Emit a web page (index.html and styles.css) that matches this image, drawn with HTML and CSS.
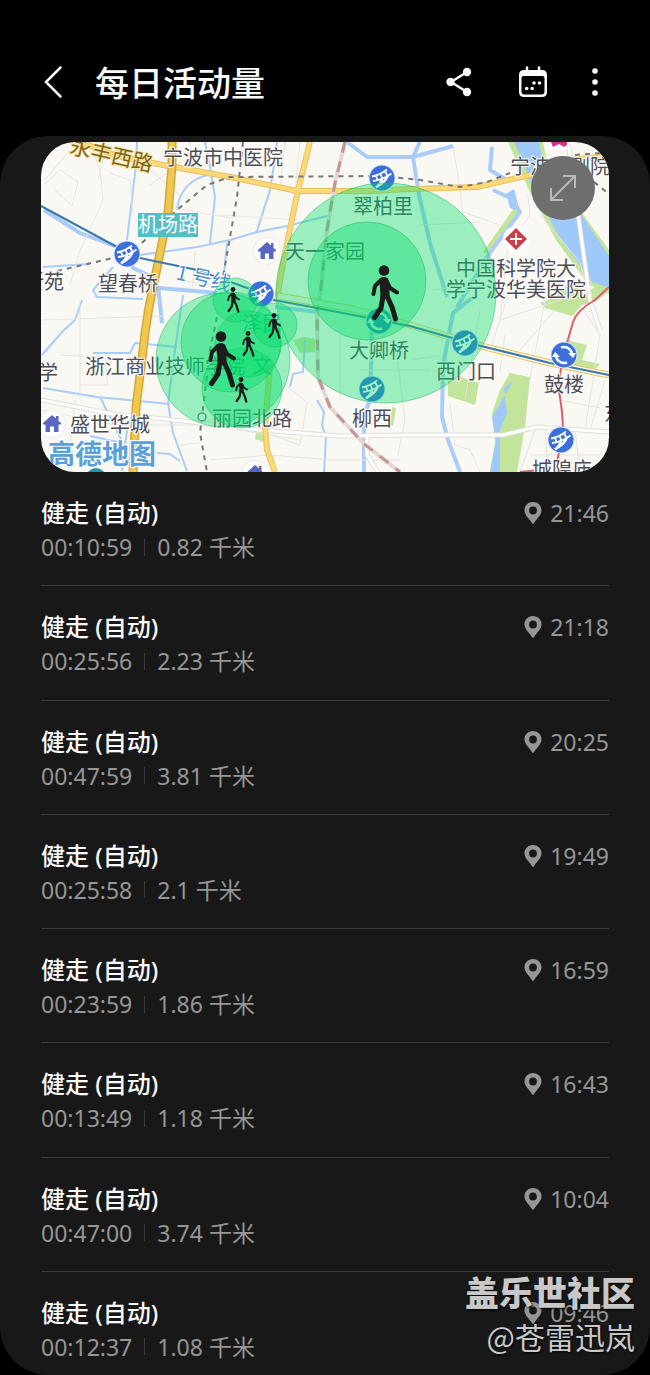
FILE: index.html
```html
<!doctype html>
<html lang="zh-CN">
<head>
    <meta charset="utf-8">
    <meta name="viewport" content="width=device-width, initial-scale=1">
    <title>每日活动量</title>
    <link rel="stylesheet" href="styles.css">
</head>
<body>
    <!--公用图标-->
    <svg class="defs" width="0" height="0" aria-hidden="true">
        <symbol id="pin" viewBox="0 0 18 22">
            <path fill-rule="evenodd" d="M9 0C4 0 .5 3.700.5 8.300.5 13.500 5.500 17 8 21.200Q9 22.400 10 21.200C12.500 17 17.500 13.500 17.500 8.300 17.500 3.700 14 0 9 0ZM9 4.600A3.900 3.900 0 1 1 9 12.400 3.900 3.900 0 1 1 9 4.600Z"/>
        </symbol>
        <symbol id="walker" viewBox="0 0 28 57">
            <circle cx="13" cy="5.500" r="5.300"/>
            <path d="M8 14Q12 10.500 17 13.500L18.500 21 18.500 34 9.500 34 9 23Z"/>
            <path class="limb-thin" d="M10 15L4 21 2.500 29M15.500 15.500L19 23 26 27.500"/>
            <path class="limb" d="M16 31L21 42 24.500 54M12 31L10 43 3.500 52.500"/>
        </symbol>
        <symbol id="metro" viewBox="0 0 28 28">
            <circle cx="14" cy="14" r="13.500" fill="#dbe8fb"/>
            <circle cx="14" cy="14" r="12.500" fill="#3a6fdc"/>
            <path fill="none" stroke="#fff" stroke-width="1.800" d="M4 12.500Q12 11 19 5.500M5 17Q15 16 23.500 9.500M8 11.500L9.500 16M12.500 10L14.500 14.500M17 7L19.500 12"/>
            <path fill="none" stroke="#fff" stroke-width="2.600" d="M14 14.500Q13 20 8 23.500M19.500 12Q18 17 11 21.500"/>
        </symbol>
        <symbol id="loop" viewBox="0 0 28 28">
            <circle cx="14" cy="14" r="13.500" fill="#dbe8fb"/>
            <circle cx="14" cy="14" r="12.500" fill="#3a6fdc"/>
            <path fill="none" stroke="#fff" stroke-width="2.600" d="M11 6.500A8.500 8.500 0 0 1 22 12M17 21.500A8.500 8.500 0 0 1 6 16"/>
            <path fill="#fff" d="M18 12H26L23 17ZM2 16H10L5 11Z"/>
        </symbol>
        <symbol id="house" viewBox="0 0 28 28">
            <circle cx="14" cy="14" r="13.500" fill="#fff" stroke="#eceaea"/>
            <path fill="#5b66c4" d="M5 13L14 5 18 8.500V6H20.500V11L23 13V14.500H20.500V22H16V16.500H12V22H7.500V14.500H5Z"/>
        </symbol>
    </svg>

    <div class="page">
        <header class="topbar">
            <button class="icon-btn narrow" type="button" aria-label="返回">
                <svg width="24" height="36" viewBox="0 0 24 36"><path class="line" d="M19.500 3.500L5 18 19.500 32.500"/></svg>
            </button>
            <h1 class="topbar-title">每日活动量</h1>
            <button class="icon-btn" type="button" aria-label="分享">
                <svg width="28" height="32" viewBox="0 0 28 32">
                    <path class="line" d="M22 6L6 16 22 26"/>
                    <circle cx="22" cy="6" r="4.200"/><circle cx="5.500" cy="16" r="4.200"/><circle cx="22" cy="26" r="4.200"/>
                </svg>
            </button>
            <button class="icon-btn" type="button" aria-label="日历">
                <svg width="30" height="32" viewBox="0 0 30 32">
                    <path class="line" d="M9 1.500V5M21 1.500V5"/>
                    <path fill-rule="evenodd" d="M6 4H24Q29 4 29 9V26Q29 31 24 31H6Q1 31 1 26V9Q1 4 6 4ZM5.500 10Q3.500 10 3.500 12V25.500Q3.500 28.500 6.500 28.500H23.500Q26.500 28.500 26.500 25.500V12Q26.500 10 24.500 10Z"/>
                    <circle cx="16" cy="17" r="1.800"/><circle cx="21.500" cy="17" r="1.800"/>
                    <circle cx="8.700" cy="22.500" r="1.800"/><circle cx="14.200" cy="22.500" r="1.800"/>
                </svg>
            </button>
            <button class="icon-btn narrow" type="button" aria-label="更多">
                <svg width="8" height="28" viewBox="0 0 8 28"><circle cx="4" cy="3" r="2.800"/><circle cx="4" cy="14" r="2.800"/><circle cx="4" cy="25" r="2.800"/></svg>
            </button>
        </header>

        <main class="panel">
            <div class="map">
                <svg class="map-canvas" viewBox="41 142 568 330" role="img" aria-label="活动地图">
                    <rect x="41" y="142" width="568" height="330" fill="#faf8f3"/>

                    <!--绿地-->
                    <g fill="#c3e59b">
                        <path d="M510 373L530 377 525 427 517 472H490L495 443 492 413 500 390Z"/>
                        <path d="M448 381L460 377 479 383 475 405 448 396Z"/>
                        <path d="M540 303L553 298 565 287 575 280 581 296 595 287 609 277V292L595 302 582 305 572 316 545 308Z"/>
                        <path d="M566 340L587 345 582 360 600 364 594 371 567 366Z"/>
                        <path d="M293 340L304 337 315 339 315 352 300 353ZM256 431L264 432 263 442 255 439ZM392 407L396 408 393 426 389 425Z"/>
                        <path d="M508 142H543L548 166 609 250V294L588 284 556 240 528 188ZM520 210L487 254 483 252 514 208Z"/>
                    </g>

                    <!--水系-->
                    <g fill="#9fc8fb">
                        <path d="M514 142H539L544 168 577 208 609 256V288L592 282 560 238 532 186 522 160Z"/>
                        <path d="M513 381L504 388 507 413 500 430 500 472H490L496 440 492 417 502 400Z"/>
                        <path d="M506 194L514 189 520 212 510 208Z"/>
                    </g>
                    <g class="river">
                        <path d="M137 142L136 165 133 190 127 240M205 142L210 167 215 197 210 243M177 210Q179 190 195 180T230 180"/>
                        <path d="M43 267L90 264M113 267L93 290 97 297 143 299M140 255L197 247 230 240 257 232 287 226 327 216"/>
                        <path d="M277 142L274 165 270 190 257 231M227 243L223 287M82 300L75 320 63 331 42 355"/>
                        <path d="M93 353L130 353 135 343 177 347M43 388L97 397 170 404M100 397L113 423 123 443M90 436L123 443"/>
                        <path d="M183 295L175 350 168 403 173 433 187 471M157 453L170 454 180 461M127 430L122 471"/>
                        <path d="M305 340L303 372 293 374 290 387M317 400L324 412 322 425 326 437 324 472"/>
                    </g>
                    <g class="river wide">
                        <path d="M44 210L80 233 120 248 133 268 150 276M158 286L162 323M160 288L217 293M275 307L318 312"/>
                        <path d="M347 142L367 157 413 157 453 146M420 142L413 157 419 195 430 243 447 297M492 147L490 170 505 179M493 190L512 199 520 212 489 254 457 307"/>
                        <path d="M472 298L453 313 446 350 443 367 442 417 448 440 460 472M372 330L370 400 364 415 364 472"/>
                    </g>

                    <!--小路-->
                    <g class="lane">
                        <path d="M45 180L70 150M55 190L72 206 78 182 60 170 45 184M110 173L130 180 133 215M90 142L100 170 103 200 92 225 80 250 70 285"/>
                        <path d="M108 142L98 180M150 170L180 195M150 185L185 160M41 320L165 316M80 300L80 400M60 355L105 357 108 385 80 385M75 400L70 445"/>
                        <path d="M190 142V175M175 208L230 218M195 252L192 290M175 280L215 285M220 215L300 220M285 142L280 190M300 142L290 240"/>
                        <path d="M41 410L115 425 210 425 300 440M180 445L200 443M210 460L270 455 330 460M285 385L307 402 300 445 265 433"/>
                        <path d="M453 145L460 190 463 215M420 225L480 222M463 212L500 225M435 290L480 280M500 320L560 300M480 310L465 400"/>
                        <path d="M528 195L530 215 508 245 500 320M540 215L580 262 590 305M555 310L520 350M505 335L500 372M530 380L545 300M490 350L510 290M580 305L600 335 585 430"/>
                        <path d="M410 360L440 356M395 340L405 420 398 455M340 335V400M360 370H430M330 460H400M560 400L600 408M450 405L455 445 470 450 480 472"/>
                        <path d="M535 430L520 472M545 430L548 472M575 430L580 472M530 455H600M605 380L590 430"/>
                    </g>
                    <g class="street-edge"><path d="M41 400L113 414 165 419 260 430 340 436 410 435 503 435 537 427 609 432M367 434V455L378 472M568 142L590 300 600 330"/></g>
                    <g class="street"><path d="M41 400L113 414 165 419 260 430 340 436 410 435 503 435 537 427 609 432M367 434V455L378 472M568 142L590 300 600 330"/></g>

                    <!--主干道-->
                    <path class="road-edge" d="M80 142L117 156 163 165 230 177 297 191H370L410 189 477 187 530 175 570 160 609 156M310 142L298 190 283 263 277 300M270 365L265 427 267 450 275 472"/>
                    <path class="road" d="M80 142L117 156 163 165 230 177 297 191H370L410 189 477 187 530 175 570 160 609 156M310 142L298 190 283 263 277 300M270 365L265 427 267 450 275 472"/>
                    <path class="highway-edge" d="M172 142V167L168 213 158 263 149 307 145 333 141 367 136 407 133 472"/>
                    <path class="highway" d="M172 142V167L168 213 158 263 149 307 145 333 141 367 136 407 133 472"/>

                    <!--铁路、地铁-->
                    <path class="rail-base" d="M345 142L335 183 327 230 320 297 317 313 318 377 330 407 363 443 400 472"/>
                    <path class="rail" d="M345 142L335 183 327 230 320 297 317 313 318 377 330 407 363 443 400 472"/>
                    <path class="dash" d="M57 271L113 258 143 242 177 210 207 185 230 177 380 176 420 180 460 187 487 182 510 173M243 142L237 197 223 277M217 317L210 350 202 417 200 433 207 472M575 155L600 153M594 182L609 194"/>
                    <path class="metro-edge" d="M278 296L353 309 410 325 477 345 550 363 609 375"/>
                    <path class="metro-gap" d="M278 296L353 309 410 325 477 345 550 363 609 375"/>
                    <path class="metro-line" d="M41 206L117 247 140 258 197 270 250 289 273 300 317 308 410 326 477 345 550 363 609 375"/>
                    <path class="red-line" d="M609 287L595 300Q577 310 573 322L563 357 558 387Q563 410 563 433L555 472M520 472L540 470"/>

                    <circle cx="202" cy="417" r="4" fill="#fff" stroke="#777" stroke-width="1.500"/>
                    <circle cx="96" cy="478" r="10" fill="#2494b0"/>
                    <circle cx="559" cy="138" r="13" fill="#fff"/>
                    <path fill="#d63384" d="M551 142H567V145L564 147 559 144 553 147Z"/>

                    <!--图标-->
                    <use href="#house" x="253" y="237" width="28" height="28"/>
                    <use href="#house" x="38" y="410" width="28" height="28"/>
                    <use href="#house" x="241" y="460" width="28" height="28"/>
                    <circle cx="516" cy="239" r="13" fill="#fff"/>
                    <path fill="#cc3d49" d="M516 228L527 239 516 250 505 239Z"/>
                    <path stroke="#fff" stroke-width="2" d="M516 233V245M510 239H522"/>
                    <use href="#metro" x="113" y="240" width="28" height="28"/>
                    <use href="#metro" x="368" y="164" width="28" height="28"/>
                    <use href="#metro" x="247" y="280" width="28" height="28"/>
                    <use href="#metro" x="451" y="329" width="28" height="28"/>
                    <use href="#metro" x="358" y="375" width="28" height="28"/>
                    <use href="#metro" x="547" y="426" width="28" height="28"/>
                    <use href="#loop" x="365" y="307" width="28" height="28"/>
                    <use href="#loop" x="550" y="341" width="28" height="28"/>

                    <!--地名-->
                    <g class="place">
                        <text x="163" y="165">宁波市中医院</text>
                        <text x="24" y="289">新苑</text>
                        <text x="98" y="291">望春桥</text>
                        <text x="285" y="259">天一家园</text>
                        <text x="353" y="214">翠柏里</text>
                        <text x="456" y="276">中国科学院大</text>
                        <text x="446" y="297">学宁波华美医院</text>
                        <text x="510" y="174">宁波大剧院</text>
                        <text x="38" y="380">学</text>
                        <text x="85" y="374">浙江商业技师学院</text>
                        <text x="70" y="432">盛世华城</text>
                        <text x="212" y="426">丽园北路</text>
                        <text x="349" y="358">大卿桥</text>
                        <text x="352" y="426">柳西</text>
                        <text x="436" y="379">西门口</text>
                        <text x="544" y="392">鼓楼</text>
                        <text x="532" y="477">城隍庙</text>
                        <text x="604" y="421">东</text>
                        <text class="teal" x="242" y="331">泽民</text>
                        <text class="teal" x="252" y="373">文</text>
                        <text class="brown" x="69" y="153" transform="rotate(13 69 153)">永丰西路</text>
                        <text class="blue" x="175" y="279" transform="rotate(13 175 279)">1 号线</text>
                    </g>
                    <rect x="138" y="213" width="60" height="24" fill="#52bec5"/>
                    <text class="road-tag" x="138" y="232">机场路</text>
                    <text class="brand" x="48" y="464">高德地图</text>

                    <!--活动范围-->
                    <g class="zone">
                        <circle cx="386" cy="293" r="110"/>
                        <circle cx="367" cy="281" r="59"/>
                        <circle cx="223" cy="360" r="67"/>
                        <circle cx="231" cy="342" r="50"/>
                        <circle cx="242" cy="388" r="40"/>
                        <circle cx="248" cy="344" r="33"/>
                        <circle cx="235" cy="300" r="22"/>
                        <circle cx="275" cy="325" r="22"/>
                    </g>
                    <g class="walkers">
                        <use href="#walker" x="371" y="265" width="28" height="57"/>
                        <use href="#walker" x="208" y="331" width="28" height="57"/>
                        <use href="#walker" x="227" y="287" width="13" height="26"/>
                        <use href="#walker" x="268" y="313" width="13" height="26"/>
                        <use href="#walker" x="242" y="331" width="13" height="26"/>
                        <use href="#walker" x="235" y="377" width="13" height="26"/>
                    </g>
                </svg>
                <button class="expand" type="button" aria-label="展开地图">
                    <svg width="28" height="28" viewBox="0 0 28 28"><path d="M2 26L26 2M14 2H26V14M2 14V26H14"/></svg>
                </button>
            </div>

            <ul class="records">
                <li class="record">
                    <div class="info">
                        <h2 class="name">健走 (自动)</h2>
                        <p class="detail"><span>00:10:59</span><span class="distance">0.82 千米</span></p>
                    </div>
                    <div class="time"><svg class="pin"><use href="#pin"/></svg><time>21:46</time></div>
                </li>
                <li class="record">
                    <div class="info">
                        <h2 class="name">健走 (自动)</h2>
                        <p class="detail"><span>00:25:56</span><span class="distance">2.23 千米</span></p>
                    </div>
                    <div class="time"><svg class="pin"><use href="#pin"/></svg><time>21:18</time></div>
                </li>
                <li class="record">
                    <div class="info">
                        <h2 class="name">健走 (自动)</h2>
                        <p class="detail"><span>00:47:59</span><span class="distance">3.81 千米</span></p>
                    </div>
                    <div class="time"><svg class="pin"><use href="#pin"/></svg><time>20:25</time></div>
                </li>
                <li class="record">
                    <div class="info">
                        <h2 class="name">健走 (自动)</h2>
                        <p class="detail"><span>00:25:58</span><span class="distance">2.1 千米</span></p>
                    </div>
                    <div class="time"><svg class="pin"><use href="#pin"/></svg><time>19:49</time></div>
                </li>
                <li class="record">
                    <div class="info">
                        <h2 class="name">健走 (自动)</h2>
                        <p class="detail"><span>00:23:59</span><span class="distance">1.86 千米</span></p>
                    </div>
                    <div class="time"><svg class="pin"><use href="#pin"/></svg><time>16:59</time></div>
                </li>
                <li class="record">
                    <div class="info">
                        <h2 class="name">健走 (自动)</h2>
                        <p class="detail"><span>00:13:49</span><span class="distance">1.18 千米</span></p>
                    </div>
                    <div class="time"><svg class="pin"><use href="#pin"/></svg><time>16:43</time></div>
                </li>
                <li class="record">
                    <div class="info">
                        <h2 class="name">健走 (自动)</h2>
                        <p class="detail"><span>00:47:00</span><span class="distance">3.74 千米</span></p>
                    </div>
                    <div class="time"><svg class="pin"><use href="#pin"/></svg><time>10:04</time></div>
                </li>
                <li class="record">
                    <div class="info">
                        <h2 class="name">健走 (自动)</h2>
                        <p class="detail"><span>00:12:37</span><span class="distance">1.08 千米</span></p>
                    </div>
                    <div class="time"><svg class="pin"><use href="#pin"/></svg><time>09:46</time></div>
                </li>
            </ul>
        </main>

        <!--水印-->
        <div class="watermark">
            <strong>盖乐世社区</strong>
            <span>@苍雷迅岚</span>
        </div>
    </div>
</body>
</html>
```
FILE: styles.css
```css
*{
    margin:0;
    padding:0;
    box-sizing:border-box;
}
body{
    background:#000;
    color:#fafafa;
    font-family:"Noto Sans","Noto Sans CJK SC",sans-serif;
}
ul{
    list-style:none;
}
.defs{
    position:absolute;
}
.page{
    position:relative;
    display:flex;
    flex-direction:column;
    min-height:100vh;
}

/* 顶部 */
.topbar{
    display:flex;
    align-items:center;
    gap:26px;
    padding:28px 43px 0 41px;
    height:136px;
}
.topbar-title{
    flex:1;
    padding-left:4px;
    font-family:"Noto Sans CJK SC",sans-serif;
    font-size:34px;
    font-weight:500;
    line-height:48px;
}
.icon-btn{
    display:flex;
    align-items:center;
    justify-content:center;
    width:48px;
    height:48px;
    border:0;
    background:none;
    cursor:pointer;
}
.icon-btn.narrow{
    width:24px;
}
.icon-btn svg{
    flex:none;
    fill:#fafafa;
}
.icon-btn .line{
    fill:none;
    stroke:#fafafa;
    stroke-width:2.500;
    stroke-linecap:round;
}

/* 内容面板 */
.panel{
    flex:1;
    display:flex;
    flex-direction:column;
    padding:6px 41px 0;
    border-radius:48px;
    background:#181818;
}

/* 地图 */
.map{
    position:relative;
    overflow:hidden;
    border-radius:34px;
}
.map-canvas{
    display:block;
    width:100%;
    height:auto;
}
.map-canvas path{
    stroke-linejoin:round;
}
.river path,
.lane path,
.street path,
.street-edge path,
.road,
.road-edge,
.highway,
.highway-edge,
.rail,
.rail-base,
.dash,
.metro-edge,
.metro-gap,
.metro-line,
.red-line{
    fill:none;
}
.river{
    stroke:#a9cdf8;
    stroke-width:2;
}
.river.wide{
    stroke-width:4;
}
.lane{
    stroke:#e6e4e0;
    stroke-width:1;
}
.street-edge{
    stroke:#e0deda;
    stroke-width:5;
}
.street{
    stroke:#fff;
    stroke-width:3;
}
.road-edge{
    stroke:#e9bf63;
    stroke-width:6;
}
.road{
    stroke:#fbd977;
    stroke-width:4;
}
.highway-edge{
    stroke:#d6a63a;
    stroke-width:9;
}
.highway{
    stroke:#efc850;
    stroke-width:6;
}
.rail-base{
    stroke:#e3d6d4;
    stroke-width:4;
}
.rail{
    stroke:#c09696;
    stroke-width:3;
    stroke-dasharray:11 9;
}
.dash{
    stroke:#77777a;
    stroke-width:2;
    stroke-dasharray:5 5;
}
.metro-edge{
    stroke:#e8c65c;
    stroke-width:7;
}
.metro-gap{
    stroke:#f6f4e8;
    stroke-width:5;
}
.metro-line{
    stroke:#3b78ae;
    stroke-width:2;
}
.red-line{
    stroke:#d9606e;
    stroke-width:2;
}
.place{
    fill:#4c4c54;
    stroke:#fff;
    stroke-width:2;
    paint-order:stroke;
    font-family:"Noto Sans CJK SC",sans-serif;
    font-size:20px;
    font-weight:400;
}
.place .teal{
    fill:#2c9aa0;
    stroke:none;
}
.place .brown{
    fill:#7d6618;
    stroke:#fbe6a6;
    font-size:21px;
}
.place .blue{
    fill:#4d8dca;
}
.road-tag{
    fill:#fff;
    font-family:"Noto Sans CJK SC",sans-serif;
    font-size:20px;
}
.brand{
    fill:#5ba0d8;
    stroke:#fff;
    stroke-width:2;
    paint-order:stroke;
    font-family:"Noto Sans CJK SC",sans-serif;
    font-size:27px;
    font-weight:700;
}
.zone{
    fill:#00dc69;
    fill-opacity:.38;
    stroke:#20b868;
    stroke-opacity:.5;
}
.walkers{
    fill:#1c1c1c;
    stroke:#1c1c1c;
    stroke-width:0;
}
.limb,
.limb-thin{
    fill:none;
    stroke-linecap:round;
    stroke-linejoin:round;
}
.limb{
    stroke-width:5;
}
.limb-thin{
    stroke-width:4;
}
.expand{
    position:absolute;
    top:14px;
    right:14px;
    display:flex;
    align-items:center;
    justify-content:center;
    width:64px;
    height:64px;
    border:0;
    border-radius:50%;
    background:#6e6e6e;
    cursor:pointer;
}
.expand svg{
    fill:none;
    stroke:#b9b9b9;
    stroke-width:2;
}

/* 记录列表 */
.records{
    flex:1;
    display:flex;
    flex-direction:column;
}
.record{
    flex:1 0 auto;
    display:flex;
    align-items:flex-start;
    justify-content:space-between;
    padding:24px 0 20px;
    border-bottom:1px solid #3c3c3c;
}
.record:last-child{
    flex:none;
    padding-bottom:11px;
    border-bottom:0;
}
.name{
    font-size:24px;
    font-weight:500;
    line-height:34px;
}
.detail{
    display:flex;
    align-items:center;
    color:#969696;
    font-size:23px;
    line-height:34px;
}
.distance{
    display:flex;
    align-items:center;
}
.distance::before{
    content:"";
    width:1px;
    height:17px;
    margin:0 12px;
    background:#3c3c3c;
}
.time{
    display:flex;
    align-items:center;
    gap:8px;
    color:#969696;
    font-size:23px;
    line-height:34px;
}
.pin{
    width:18px;
    height:22px;
    fill:#969696;
}

/* 水印 */
.watermark{
    position:absolute;
    right:15px;
    bottom:17px;
    display:flex;
    flex-direction:column;
    align-items:flex-end;
    color:#c8c8c8;
    font-family:"Noto Sans CJK SC",sans-serif;
    text-shadow:1px 1px 2px #000;
    pointer-events:none;
}
.watermark strong{
    font-size:34px;
    font-weight:900;
    line-height:44px;
}
.watermark span{
    font-size:30px;
    line-height:44px;
}
```
